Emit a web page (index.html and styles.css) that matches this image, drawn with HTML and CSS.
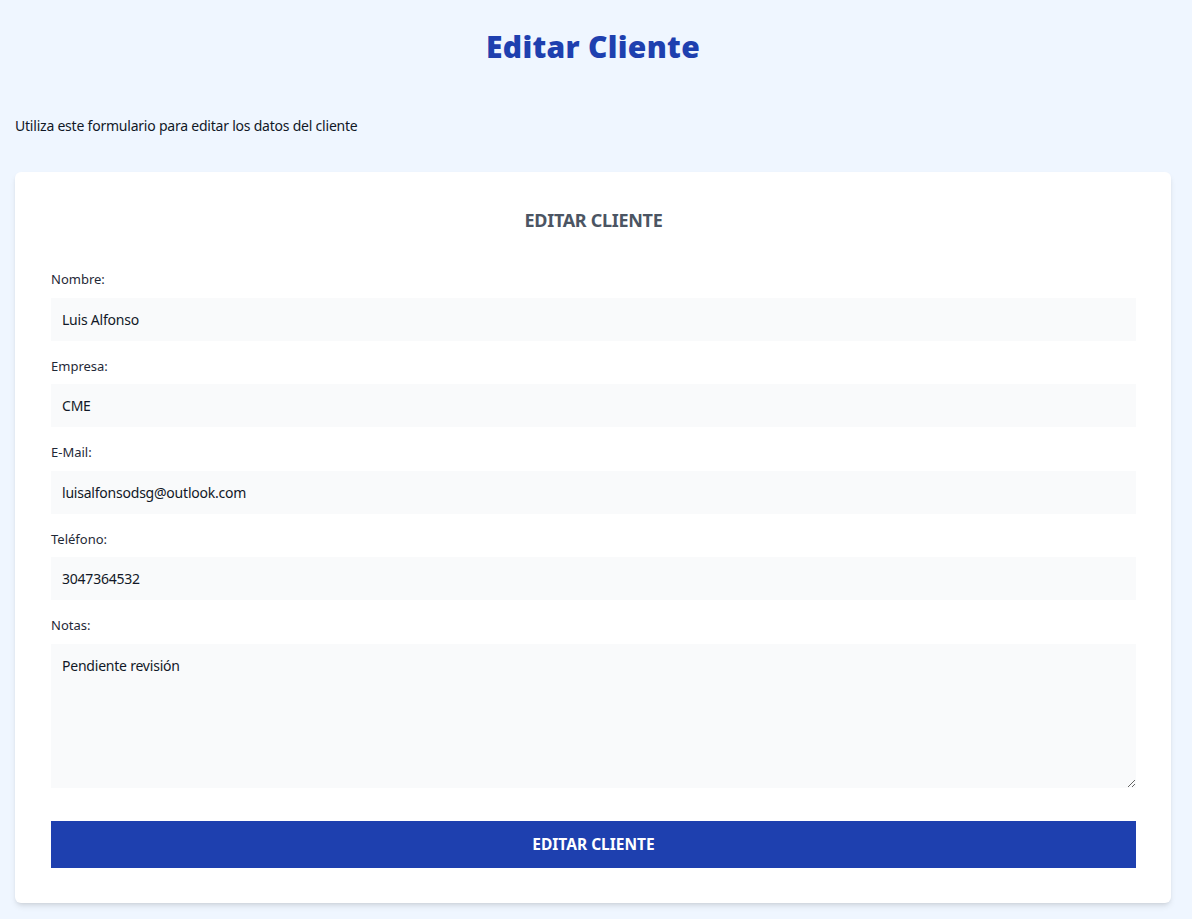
FILE: index.html
```html
<!DOCTYPE html>
<html lang="es">
<head>
<meta charset="utf-8">
<title>Editar Cliente</title>
<link rel="stylesheet" href="styles.css">
</head>
<body>
<main class="page">
  <h1 class="page-title">Editar Cliente</h1>
  <p class="page-intro">Utiliza este formulario para editar los datos del cliente</p>
  <form class="card">
    <h2 class="card-title">Editar Cliente</h2>
    <div class="field">
      <label class="field-label" for="nombre">Nombre:</label>
      <input class="field-input" id="nombre" type="text" value="Luis Alfonso">
    </div>
    <div class="field">
      <label class="field-label" for="empresa">Empresa:</label>
      <input class="field-input" id="empresa" type="text" value="CME">
    </div>
    <div class="field">
      <label class="field-label" for="email">E-Mail:</label>
      <input class="field-input" id="email" type="email" value="luisalfonsodsg@outlook.com">
    </div>
    <div class="field">
      <label class="field-label" for="telefono">Teléfono:</label>
      <input class="field-input" id="telefono" type="tel" value="3047364532">
    </div>
    <div class="field">
      <label class="field-label" for="notas">Notas:</label>
      <textarea class="field-input field-textarea" id="notas">Pendiente revisión</textarea>
    </div>
    <button class="submit" type="button">Editar Cliente</button>
  </form>
</main>
</body>
</html>
```
FILE: styles.css
```css
* { box-sizing: border-box; }
html, body { margin: 0; padding: 0; }
body {
  background: #eff6ff;
  font-family: "Noto Sans", "Open Sans", sans-serif;
  color: #111827;
}
.page {
  padding: 29px 21px 16px 15px;
}
.page-title {
  margin: 0;
  text-align: center;
  font-size: 30px;
  line-height: 36px;
  font-weight: 900;
  letter-spacing: 0.3px;
  color: #1e40af;
}
.page-intro {
  margin: 51px 0 0;
  font-size: 14px;
  line-height: 20px;
  letter-spacing: -0.22px;
  color: #111827;
}
.card {
  margin-top: 36px;
  background: #fff;
  border-radius: 6px;
  box-shadow: 0 4px 6px -1px rgba(0,0,0,0.1), 0 2px 4px -2px rgba(0,0,0,0.1);
  padding: 34px 35px 35px 36px;
}
.card-title {
  margin: 0 0 36px;
  text-align: center;
  text-transform: uppercase;
  font-size: 18px;
  line-height: 28px;
  font-weight: 700;
  letter-spacing: -0.3px;
  color: #4b5563;
}
.field { margin-bottom: 16px; }
.field-label {
  display: block;
  font-size: 13px;
  line-height: 19.5px;
  color: #1f2937;
  margin-bottom: 8px;
}
.field-input {
  display: block;
  width: 100%;
  height: 43px;
  border: 0;
  background: #f9fafb;
  padding: 12px 11px;
  font-family: inherit;
  font-size: 14px;
  letter-spacing: -0.22px;
  color: #111827;
  outline: none;
}
.field-textarea {
  height: 144px;
  resize: vertical;
  padding-top: 12px;
}
.field:last-of-type { margin-bottom: 33px; }
.submit {
  display: block;
  width: 100%;
  height: 47px;
  border: 0;
  background: #1e40af;
  color: #fff;
  font-family: inherit;
  font-size: 15.5px;
  font-weight: 700;
  text-transform: uppercase;
  cursor: pointer;
}
```
